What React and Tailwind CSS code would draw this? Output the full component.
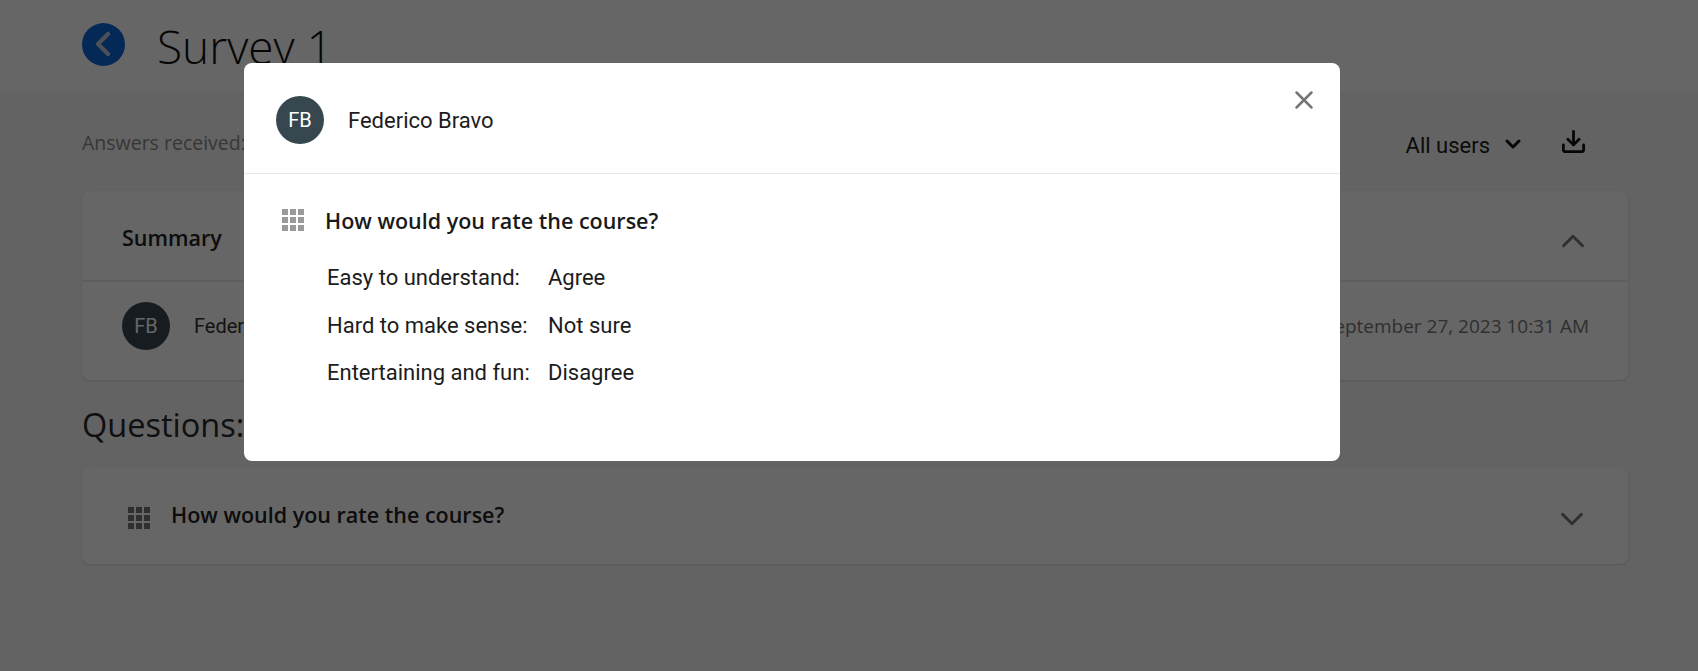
import { ChevronDown, ChevronLeft, ChevronUp, Download, X } from "lucide-react";

const OPEN_SANS = "font-['Open_Sans',sans-serif]";
const ROBOTO = "font-['Roboto',sans-serif]";

const ANSWERS = [
  { label: "Easy to understand:", value: "Agree" },
  { label: "Hard to make sense:", value: "Not sure" },
  { label: "Entertaining and fun:", value: "Disagree" },
];

function Avatar() {
  return (
    <div className={`flex h-[48px] w-[48px] shrink-0 items-center justify-center rounded-full bg-[#37474f] text-[20px] text-white ${ROBOTO}`}>
      FB
    </div>
  );
}

function GridIcon({ className }) {
  return (
    <svg className={className} width="22" height="22" viewBox="0 0 22 22" fill="currentColor">
      {[0, 8, 16].map((y) =>
        [0, 8, 16].map((x) => <rect key={`${x}-${y}`} x={x} y={y} width="6" height="6" />)
      )}
    </svg>
  );
}

function AnswerModal() {
  return (
    <div className="absolute inset-0 bg-black/60">
      <div className="ml-[244px] mt-[63px] h-[398px] w-[1096px] rounded-[8px] bg-white">
        <div className="flex h-[111px] items-start justify-between border-b border-[#e8e8e8] pl-[32px] pr-[21px]">
          <div className="mt-[33px] flex items-center gap-[24px]">
            <Avatar />
            <span className={`text-[22px] text-[#1c1c1c] ${ROBOTO}`}>Federico Bravo</span>
          </div>
          <button type="button" className="mt-[22px] text-[#757575]">
            <X size={30} strokeWidth={2} />
          </button>
        </div>
        <div className="pl-[38px] pt-[31px]">
          <div className="flex items-center gap-[21px]">
            <GridIcon className="text-[#9a9a9a]" />
            <h3 className={`translate-y-[1px] text-[21.5px] font-semibold leading-[30px] text-[#1a1a1a] ${OPEN_SANS}`}>
              How would you rate the course?
            </h3>
          </div>
          <div className={`ml-[45px] mt-[19px] text-[22px] text-[#1c1c1c] ${ROBOTO}`}>
            {ANSWERS.map((answer) => (
              <div key={answer.label} className="flex h-[47.5px] items-center">
                <span className="w-[221px]">{answer.label}</span>
                <span>{answer.value}</span>
              </div>
            ))}
          </div>
        </div>
      </div>
    </div>
  );
}

export default function App() {
  return (
    <div className="relative h-[671px] overflow-hidden bg-[#f7f7f9]">
      <header className="flex h-[92px] items-center bg-white pl-[82px]">
        <button
          type="button"
          className="flex h-[43px] w-[43px] -translate-y-[2px] items-center justify-center rounded-full bg-[#0a66d8] text-[#c4cedb]"
        >
          <ChevronLeft size={40} strokeWidth={2.5} className="-translate-x-[1px]" />
        </button>
        <h1 className={`ml-[32px] text-[46px] font-light text-[#111] ${OPEN_SANS}`}>Survey 1</h1>
      </header>

      <main className="mx-[82px] w-[1546px]">
        <div className="flex h-[99px] items-center justify-between">
          <span className={`translate-y-[1px] text-[19.5px] text-[#8a8a8a] ${OPEN_SANS}`}>Answers received: 1</span>
          <div className="mr-[41px] flex items-center">
            <span className={`translate-y-[4px] text-[22px] text-[#1c1c1c] ${ROBOTO}`}>All users</span>
            <ChevronDown size={24} strokeWidth={3} className="ml-[11px] translate-y-[2px] text-[#111]" />
            <Download size={27} strokeWidth={2.5} className="ml-[35px] text-[#111]" />
          </div>
        </div>

        <section className="h-[189px] rounded-[8px] bg-white shadow-sm">
          <div className="flex h-[91px] items-center justify-between border-b-2 border-[#ececec] pl-[40px] pr-[36px]">
            <h2 className={`translate-y-[3px] text-[21.5px] font-semibold text-[#222] ${OPEN_SANS}`}>Summary</h2>
            <ChevronUp size={38} strokeWidth={1.8} className="translate-y-[5px] text-[#757575]" />
          </div>
          <div className="flex h-[87px] items-center justify-between pl-[40px] pr-[39px]">
            <div className="flex items-center gap-[24px]">
              <Avatar />
              <span className={`text-[20px] text-[#333] ${ROBOTO}`}>Federico Bravo</span>
            </div>
            <span className={`translate-y-[1px] text-[19px] text-[#777] ${OPEN_SANS}`}>September 27, 2023 10:31 AM</span>
          </div>
        </section>

        <h2 className={`mt-[22px] text-[32.5px] leading-[46px] text-[#2a2a2a] ${OPEN_SANS}`}>Questions:</h2>

        <section className="mt-[19px] flex h-[97px] items-center justify-between rounded-[8px] bg-white pl-[46px] pr-[37px] shadow-sm">
          <div className="flex items-center gap-[21px]">
            <GridIcon className="translate-y-[2px] text-[#757575]" />
            <h3 className={`text-[21.5px] font-semibold text-[#222] ${OPEN_SANS}`}>How would you rate the course?</h3>
          </div>
          <ChevronDown size={38} strokeWidth={1.8} className="translate-y-[3px] text-[#757575]" />
        </section>
      </main>

      <AnswerModal />
    </div>
  );
}
